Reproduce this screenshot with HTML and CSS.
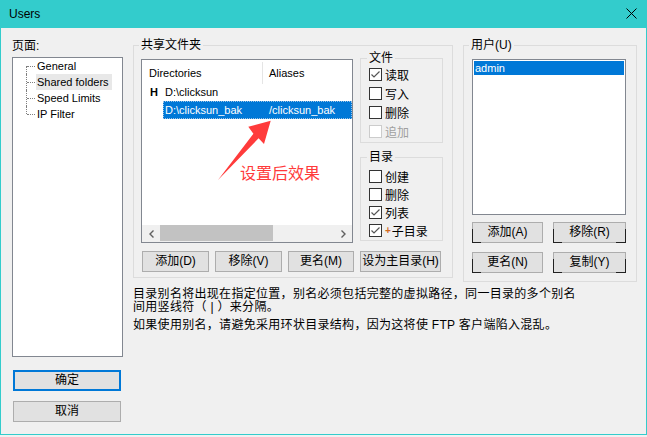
FILE: index.html
```html
<!DOCTYPE html>
<html lang="zh-CN">
<head>
  <meta charset="UTF-8">
  <title>Users</title>
  <link rel="stylesheet" href="styles.css">
</head>
<body>
  <div class="window">
    <!-- Caption bar -->
    <header class="titlebar">
      <span class="title">Users</span>
      <svg class="close" width="11" height="11" viewBox="0 0 11 11">
        <path d="M0.5 0.5 L10.5 10.5 M10.5 0.5 L0.5 10.5" stroke="#000" stroke-width="1" fill="none"/>
      </svg>
    </header>

    <div class="content">
      <!-- Page tree + dialog buttons -->
      <aside class="pages">
        <div class="label">页面:</div>
        <div class="tree">
          <ul>
            <li>General</li>
            <li class="current">Shared folders</li>
            <li>Speed Limits</li>
            <li>IP Filter</li>
          </ul>
        </div>
        <div class="dlg-buttons">
          <button class="btn default">确定</button>
          <button class="btn">取消</button>
        </div>
      </aside>

      <main class="page">
        <div class="groups">
          <!-- Shared folders -->
          <fieldset class="group shared">
            <legend>共享文件夹</legend>
            <div class="shared-body">
              <div class="listbox dirs">
                <div class="cols">
                  <span class="col-dir">Directories</span>
                  <span class="col-alias">Aliases</span>
                </div>
                <div class="row home"><span class="mark">H</span><span>D:\clicksun</span></div>
                <div class="row alias"><span class="sel"><span class="cell-dir">D:\clicksun_bak</span><span>/clicksun_bak</span></span></div>

                <svg class="callout-arrow" width="70" height="74" viewBox="0 0 70 74">
                  <polygon points="60.7,8.7 38.3,14.7 43.4,21.7 8,68 48.6,26.3 54,32" fill="#ff3b3b"/>
                </svg>
                <span class="callout">设置后效果</span>

                <div class="hscroll">
                  <span class="arrow">
                    <svg width="5" height="8" viewBox="0 0 5 8"><path d="M4.5 0.5 L1 4 L4.5 7.5" stroke="#606060" stroke-width="1.4" fill="none"/></svg>
                  </span>
                  <span class="track"><span class="thumb"></span></span>
                  <span class="arrow">
                    <svg width="5" height="8" viewBox="0 0 5 8"><path d="M0.5 0.5 L4 4 L0.5 7.5" stroke="#606060" stroke-width="1.4" fill="none"/></svg>
                  </span>
                </div>
              </div>

              <div class="perms">
                <fieldset class="group sub files">
                  <legend>文件</legend>
                  <div class="check"><span class="cb"><svg width="11" height="11" viewBox="0 0 11 11"><path d="M1.5 5.5 L4 8 L9.5 2.5" stroke="#555" stroke-width="1.2" fill="none"/></svg></span>读取</div>
                  <div class="check"><span class="cb"></span>写入</div>
                  <div class="check"><span class="cb"></span>删除</div>
                  <div class="check disabled"><span class="cb"></span>追加</div>
                </fieldset>
                <fieldset class="group sub folders">
                  <legend>目录</legend>
                  <div class="check"><span class="cb"></span>创建</div>
                  <div class="check"><span class="cb"></span>删除</div>
                  <div class="check"><span class="cb"><svg width="11" height="11" viewBox="0 0 11 11"><path d="M1.5 5.5 L4 8 L9.5 2.5" stroke="#555" stroke-width="1.2" fill="none"/></svg></span>列表</div>
                  <div class="check"><span class="cb"><svg width="11" height="11" viewBox="0 0 11 11"><path d="M1.5 5.5 L4 8 L9.5 2.5" stroke="#555" stroke-width="1.2" fill="none"/></svg></span><span class="plus">+</span>子目录</div>
                </fieldset>
              </div>
            </div>

            <div class="actions">
              <button class="btn w-add">添加(D)</button>
              <button class="btn w-remove">移除(V)</button>
              <button class="btn w-rename">更名(M)</button>
              <button class="btn w-home">设为主目录(H)</button>
            </div>
          </fieldset>

          <!-- Users -->
          <fieldset class="group users">
            <legend>用户(U)</legend>
            <div class="listbox user-list">
              <div class="item selected">admin</div>
            </div>
            <div class="user-actions">
              <button class="btn ubtn">添加(A)</button>
              <button class="btn ubtn right">移除(R)</button>
              <button class="btn ubtn">更名(N)</button>
              <button class="btn ubtn right">复制(Y)</button>
            </div>
          </fieldset>
        </div>

        <div class="notes">
          <p>目录别名将出现在指定位置，别名必须包括完整的虚拟路径，同一目录的多个别名<br>间用竖线符（ | ）来分隔。</p>
          <p>如果使用别名，请避免采用环状目录结构，因为这将使 FTP 客户端陷入混乱。</p>
        </div>
      </main>
    </div>
  </div>
</body>
</html>
```

FILE: styles.css
```css
* {
  margin: 0;
  padding: 0;
  box-sizing: border-box;
}

body {
  background: #f0f0f0;
  color: #000;
  font-family: "Liberation Sans", "Noto Sans CJK SC", sans-serif;
  font-size: 12px;
}

/* Window frame */
.window {
  width: 647px;
  height: 435px;
  border: 1px solid #33cccc;
  border-top: 0;
  background: #f0f0f0;
  display: flex;
  flex-direction: column;
}

.titlebar {
  height: 28px;
  flex: none;
  background: #33cccc;
  display: flex;
  align-items: center;
  padding: 0 9px 0 8px;
}

.title {
  font-size: 12px;
  line-height: 16px;
}

.close {
  margin-left: auto;
  margin-top: -1px;
}

.content {
  display: flex;
  gap: 10px;
  padding: 10px 0 0 11px;
}

/* Left column */
.pages {
  width: 111px;
  flex: none;
}

.label {
  line-height: 16px;
}

.tree {
  margin-top: 3px;
  height: 300px;
  background: #fff;
  border: 1px solid #828790;
}

.tree ul {
  list-style: none;
  padding-left: 23px;
}

.tree li {
  position: relative;
  width: fit-content;
  padding: 0 3px 0 1px;
  font-size: 11px;
  line-height: 16px;
}

.tree li.current {
  background: #e8e8e8;
}

/* dotted tree connectors */
.tree li::before {
  content: '';
  position: absolute;
  left: -10px;
  top: 0;
  bottom: 0;
  border-left: 1px dotted #808080;
}

.tree li:first-child::before {
  top: 8px;
}

.tree li:last-child::before {
  bottom: 8px;
}

.tree li::after {
  content: '';
  position: absolute;
  left: -9px;
  top: 8px;
  width: 8px;
  border-top: 1px dotted #808080;
}

.dlg-buttons {
  margin-top: 13px;
  padding-left: 1px;
  display: flex;
  flex-direction: column;
  gap: 10px;
}

.dlg-buttons .btn {
  width: 108px;
}

/* Buttons */
.btn {
  height: 21px;
  background: #e1e1e1;
  border: 1px solid #adadad;
  font-family: inherit;
  font-size: 12px;
  line-height: 19px;
  color: #000;
  text-align: center;
}

.btn.default {
  border: 2px solid #0078d7;
  line-height: 17px;
}

/* Main column */
.page {
  margin-top: -1px;
}

.groups {
  display: flex;
  align-items: flex-start;
  gap: 10px;
}

.group {
  border: 1px solid #dcdcdc;
  min-width: 0;
}

.group legend {
  padding: 0 2px;
  margin-left: -2px;
  line-height: 16px;
}

.shared {
  width: 320px;
  padding: 6px 9px 5px 7px;
}

.shared-body {
  display: grid;
  grid-template-columns: 212px 83px;
  column-gap: 7px;
  align-items: start;
}

/* List boxes */
.listbox {
  background: #fff;
  border: 1px solid #828790;
}

.dirs {
  position: relative;
  height: 184px;
  display: flex;
  flex-direction: column;
  font-size: 11px;
}

.cols {
  height: 24px;
  display: flex;
  align-items: flex-end;
}

.col-dir {
  width: 121px;
  height: 22px;
  line-height: 22px;
  padding-left: 7px;
  border-right: 1px solid #e5e5e5;
}

.col-alias {
  height: 22px;
  line-height: 22px;
  padding-left: 6px;
}

.row {
  display: flex;
}

.home {
  height: 17px;
  line-height: 17px;
  padding-left: 8px;
}

.mark {
  width: 15px;
  font-weight: bold;
}

.alias {
  padding-left: 21px;
}

.sel {
  flex: 1;
  display: flex;
  height: 18px;
  line-height: 18px;
  padding-left: 2px;
  background: #0078d7;
  color: #fff;
  outline: 1px dotted #9cc3e6;
  outline-offset: -1px;
}

.cell-dir {
  width: 104px;
}

/* annotation drawn over the list */
.callout-arrow {
  position: absolute;
  left: 68px;
  top: 52px;
}

.callout {
  position: absolute;
  left: 98px;
  top: 102px;
  font-family: "Noto Sans CJK SC", sans-serif;
  font-size: 16px;
  line-height: 20px;
  color: #ff3b3b;
  white-space: nowrap;
}

.hscroll {
  margin-top: auto;
  height: 17px;
  display: flex;
  background: #f0f0f0;
}

.hscroll .arrow {
  width: 18px;
  display: flex;
  align-items: center;
  justify-content: center;
}

.track {
  flex: 1;
}

.thumb {
  display: block;
  width: 113px;
  height: 16px;
  background: #c2c2c2;
}

/* Permission groups */
.perms {
  margin-top: -8px;
  display: flex;
  flex-direction: column;
  gap: 7px;
}

.sub {
  width: 83px;
  padding: 0 0 1px 8px;
}

.sub legend {
  line-height: 14px;
}

.check {
  height: 19px;
  display: flex;
  align-items: center;
  gap: 3px;
  white-space: nowrap;
}

.folders {
  padding-top: 3px;
}

.folders .check {
  height: 18px;
}

.cb {
  width: 13px;
  height: 13px;
  flex: none;
  background: #fff;
  border: 1px solid #333;
  display: flex;
  align-items: center;
  justify-content: center;
}

.check.disabled {
  color: #a0a0a0;
}

.check.disabled .cb {
  border-color: #cccccc;
}

.plus {
  font-size: 10px;
  font-weight: bold;
  color: #d2691e;
  margin-right: -2px;
}

.actions {
  display: flex;
  gap: 6px;
  margin-top: 8px;
  padding-left: 1px;
}

.w-add, .w-remove { width: 67px; }
.w-rename { width: 66px; }
.w-home { width: 81px; }

/* Users group */
.users {
  width: 174px;
  padding: 6px 10px 8px 8px;
}

.users legend {
  margin-left: -3px;
}

.user-list {
  height: 156px;
  padding: 1px;
  font-size: 11px;
}

.item {
  height: 14px;
  line-height: 14px;
  padding-left: 1px;
}

.item.selected {
  background: #0078d7;
  color: #fff;
}

.user-actions {
  display: grid;
  grid-template-columns: 71px 73px;
  gap: 9px 10px;
  margin-top: 7px;
}

.ubtn {
  position: relative;
}

/* dark corner ticks on these buttons */
.ubtn::before {
  content: '';
  position: absolute;
  left: -1px;
  bottom: -1px;
  width: 8px;
  height: 13px;
  border-left: 1px solid #222;
  border-bottom: 1px solid #222;
}

.ubtn.right::after {
  content: '';
  position: absolute;
  right: -1px;
  bottom: -1px;
  width: 9px;
  height: 13px;
  border-right: 1px solid #222;
  border-bottom: 1px solid #222;
}

/* Help text */
.notes {
  margin-top: 6px;
}

.notes p {
  line-height: 13px;
  letter-spacing: 0.3px;
  white-space: nowrap;
}

.notes p + p {
  margin-top: 5px;
}
```
